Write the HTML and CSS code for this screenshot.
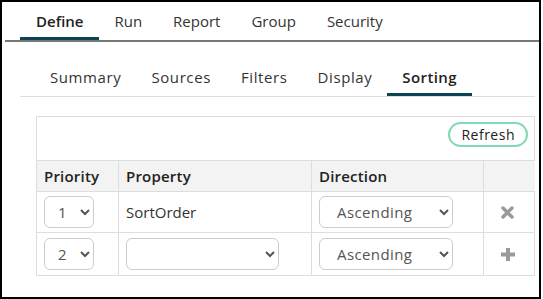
FILE: index.html
```html
<!DOCTYPE html>
<html lang="en">
<head>
  <meta charset="UTF-8" />
  <meta name="viewport" content="width=device-width, initial-scale=1.0"/>
  <title>Report Definition - Sorting</title>
  <link rel="stylesheet" href="styles.css">
</head>
<body>
  <div class="frame">
    <nav class="tabs main-tabs">
      <a class="tab active">Define</a>
      <a class="tab">Run</a>
      <a class="tab">Report</a>
      <a class="tab">Group</a>
      <a class="tab">Security</a>
    </nav>

    <div class="panel">
      <nav class="tabs sub-tabs">
        <a class="tab">Summary</a>
        <a class="tab">Sources</a>
        <a class="tab">Filters</a>
        <a class="tab">Display</a>
        <a class="tab active">Sorting</a>
      </nav>

      <div class="sort-box">
        <div class="toolbar">
          <button class="refresh">Refresh</button>
        </div>
        <table class="sort-table">
          <tr>
            <th class="col-priority">Priority</th>
            <th class="col-property">Property</th>
            <th class="col-direction">Direction</th>
            <th class="col-action"></th>
          </tr>
          <tr>
            <td>
              <select class="priority">
                <option selected>1</option>
                <option>2</option>
              </select>
            </td>
            <td class="prop-name">SortOrder</td>
            <td>
              <select class="direction">
                <option selected>Ascending</option>
                <option>Descending</option>
              </select>
            </td>
            <td class="action">
              <svg class="icon" width="13" height="13" viewBox="0 0 13 13">
                <path d="M2 2 L11 11 M11 2 L2 11" stroke="#9a9a9a" stroke-width="3.4" stroke-linecap="round"/>
              </svg>
            </td>
          </tr>
          <tr class="last">
            <td>
              <select class="priority">
                <option>1</option>
                <option selected>2</option>
              </select>
            </td>
            <td>
              <select class="property">
                <option></option>
                <option>SortOrder</option>
              </select>
            </td>
            <td>
              <select class="direction">
                <option selected>Ascending</option>
                <option>Descending</option>
              </select>
            </td>
            <td class="action">
              <svg class="icon" width="14" height="13" viewBox="0 0 14 13">
                <rect x="5" y="0" width="4" height="13" fill="#9a9a9a"/>
                <rect x="0" y="4.5" width="14" height="4" fill="#9a9a9a"/>
              </svg>
            </td>
          </tr>
        </table>
      </div>
    </div>
  </div>
</body>
</html>
```

FILE: styles.css
```css
body {
  margin: 0;
  font-family: 'Open Sans', 'Noto Sans', sans-serif;
  font-size: 15px;
  color: #333;
  background: #fff;
}

.frame {
  box-sizing: border-box;
  width: 541px;
  height: 299px;
  border: 2px solid #000;
}

.tabs {
  display: flex;
}

.tab {
  display: block;
  padding: 0 16px;
  line-height: 32px;
  border-bottom: 3px solid transparent;
  color: #333;
  cursor: pointer;
}

.tab.active {
  font-weight: 600;
  color: #222;
  border-bottom-color: #0e4354;
}

.main-tabs {
  margin: 3px 0 0 3px;
  padding-left: 15px;
  border-bottom: 2px solid #777;
}

.main-tabs .tab {
  padding: 0 15.5px;
}

.main-tabs .tab:first-child {
  padding-left: 16px;
}

.panel {
  padding: 0 4px 0 18px;
}

.sub-tabs {
  margin-top: 19px;
  padding-left: 15px;
  border-bottom: 1px solid #ddd;
}

.sub-tabs .tab {
  padding: 0 15px;
  letter-spacing: 0.6px;
}

.sub-tabs .tab.active {
  letter-spacing: 0.4px;
}

.sort-box {
  margin: 19px 0 0 16px;
  border: 1px solid #ddd;
}

.toolbar {
  display: flex;
  justify-content: flex-end;
  height: 43px;
  padding: 5px 6px 0 0;
  box-sizing: border-box;
}

.refresh {
  height: 25px;
  padding: 0 11px;
  font-family: inherit;
  font-size: 14px;
  letter-spacing: 0.5px;
  color: #222;
  background: #fff;
  border: 2px solid #82d9b3;
  border-radius: 13px;
}

.sort-table {
  width: 100%;
  border-collapse: separate;
  border-spacing: 0;
  table-layout: fixed;
}

.sort-table th,
.sort-table td {
  box-sizing: border-box;
  padding: 0 7px;
  border-top: 1px solid #ddd;
  border-left: 1px solid #ddd;
  text-align: left;
  vertical-align: middle;
}

.sort-table th:first-child,
.sort-table td:first-child {
  border-left: none;
}

.sort-table th {
  height: 31px;
  background: #f3f3f3;
  font-weight: 600;
  letter-spacing: 0.2px;
  color: #222;
}

.sort-table td {
  height: 41px;
}

.sort-table tr.last td {
  height: 43px;
}

.col-priority { width: 81px; }
.col-property { width: 193px; }
.col-direction { width: 172px; }
.col-action { width: 52px; }

.prop-name {
  color: #333;
}

select {
  height: 32px;
  padding: 0 10px 0 9px;
  font-family: inherit;
  font-size: 15px;
  letter-spacing: 0.4px;
  color: #555;
  background: #fff;
  border: 1px solid #ccc;
  border-radius: 6px;
}

select.property {
  width: 153px;
  padding-right: 4px;
}

select.direction {
  width: 134px;
  padding: 0 4px 0 13px;
}

.action {
  text-align: center;
}

.icon {
  display: block;
  margin: 0 auto;
  position: relative;
  left: -2px;
}
```
